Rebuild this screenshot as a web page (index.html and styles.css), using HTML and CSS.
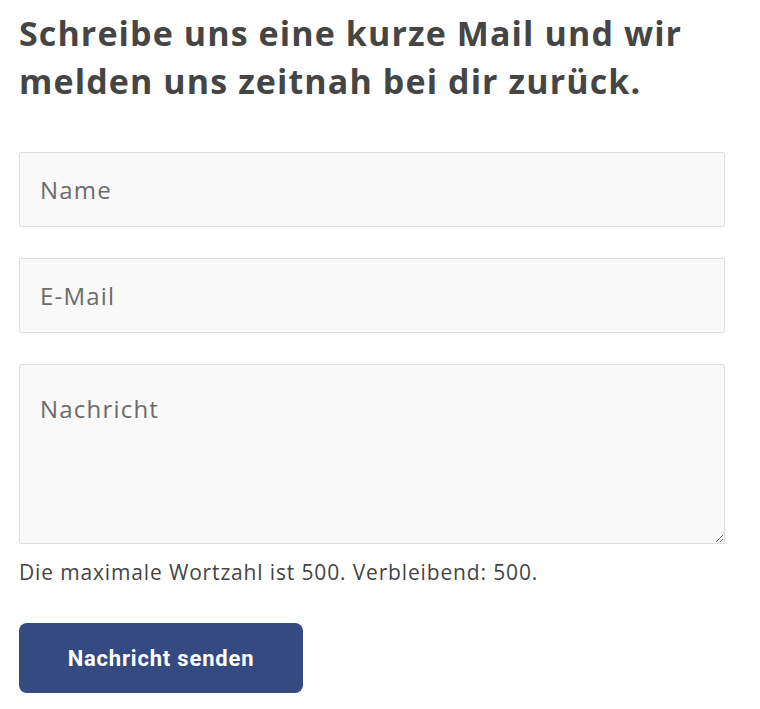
FILE: index.html
```html
<!DOCTYPE html>
<html lang="de">
<head>
<meta charset="UTF-8" />
<meta name="viewport" content="width=device-width, initial-scale=1" />
<title>Kontakt</title>
<link rel="stylesheet" href="styles.css">
</head>
<body>
<div class="contact">
  <h2>Schreibe uns eine kurze Mail und wir<br>melden uns zeitnah bei dir zurück.</h2>

  <form class="contact-form" onsubmit="return false;">
    <input type="text" class="field" placeholder="Name" />
    <input type="email" class="field" placeholder="E-Mail" />
    <textarea class="field message" placeholder="Nachricht"></textarea>
    <p class="counter">Die maximale Wortzahl ist 500. Verbleibend: 500.</p>
    <button type="submit" class="send">Nachricht senden</button>
  </form>
</div>
</body>
</html>
```

FILE: styles.css
```css
body {
  margin: 0;
  background: #fff;
  font-family: "Open Sans", "Lato", sans-serif;
  color: #444;
}
.contact {
  width: 706px;
  padding: 9px 0 0 19px;
}
h2 {
  margin: 0 0 47px 0;
  font-size: 34px;
  line-height: 48px;
  font-weight: 700;
  letter-spacing: 1.1px;
  color: #454545;
}
.contact-form {
  display: flex;
  flex-direction: column;
}
.field {
  box-sizing: border-box;
  width: 100%;
  height: 75px;
  margin: 0 0 31px 0;
  padding: 0 20px;
  background: #f9f9f9;
  border: 1px solid #dedede;
  border-radius: 2px;
  font-family: inherit;
  font-size: 24px;
  letter-spacing: 1.2px;
  color: #444;
}
.field::placeholder {
  color: #6b6b6b;
}
.message {
  height: 180px;
  margin-bottom: 16px;
  padding-top: 27px;
  resize: vertical;
}
.counter {
  margin: 0 0 39px 0;
  font-size: 21px;
  line-height: 24px;
  letter-spacing: 0.85px;
  color: #444;
}
.send {
  width: 284px;
  height: 70px;
  border: none;
  border-radius: 8px;
  background: #344a80;
  color: #fff;
  font-family: "Roboto", sans-serif;
  font-weight: 700;
  font-size: 22px;
  letter-spacing: 0.8px;
  cursor: pointer;
}
.send:hover {
  background: #2a3d6b;
}
```
